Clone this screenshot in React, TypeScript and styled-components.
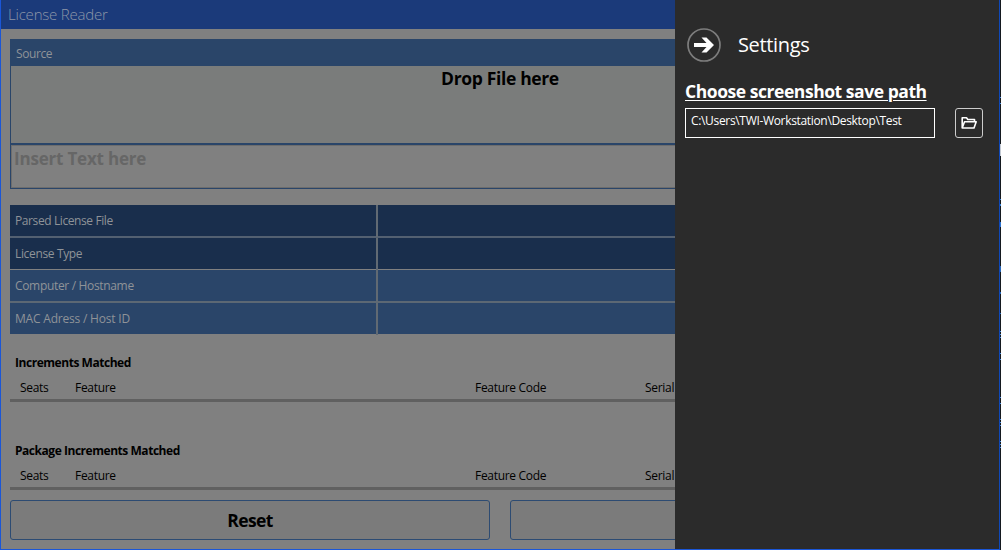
import React from "react";
import styled, { createGlobalStyle } from "styled-components";

const Global = createGlobalStyle`
  * { box-sizing: border-box; }
  body { margin: 0; overflow: hidden; background: #000; }
  button { font: inherit; color: inherit; padding: 0; margin: 0; }
`;

const Desktop = styled.div`
  position: relative;
  display: flex;
  width: 1001px;
  height: 550px;
  overflow: hidden;
  background: #14191f;
  font-family: "Open Sans", "Noto Sans", sans-serif;
`;

const Window = styled.div`
  width: 1000px;
  height: 550px;
  flex: none;
  display: flex;
  flex-direction: column;
  background: #808080;
  border: solid #1a56d8;
  border-width: 0 1px 1px;
  border-right-color: #0f48b8;
`;

const Label = styled.span<{ $size: number; $track?: number; $weight?: number }>`
  display: block;
  white-space: nowrap;
  font-size: ${(p) => p.$size}px;
  font-weight: ${(p) => p.$weight ?? 400};
  letter-spacing: ${(p) => p.$track ?? 0}px;
`;

const TitleBar = styled.header`
  height: 29px;
  flex: none;
  padding-left: 7px;
  line-height: 29px;
  color: #8c96a8;
  background: #1b3a7a;
`;

const Content = styled.main`
  padding: 10px 9px 0;
`;

const Source = styled.section`
  height: 150px;
  border: 1px solid #2a4569;
`;

const SourceHead = styled.div`
  height: 26px;
  padding: 1px 0 0 5px;
  line-height: 26px;
  color: #8f9398;
  background: #2a4569;
`;

const DropZone = styled.div`
  display: flex;
  justify-content: center;
  height: 79px;
  line-height: 25px;
  color: #000;
  background: #7a7c7b;
  border-bottom: 2px solid #2a4569;
`;

const TextInput = styled.div`
  height: 43px;
  padding-left: 2px;
  line-height: 26px;
  color: #666;
  border: 1px solid #6d6d6d;
`;

const Details = styled.section`
  margin-top: 16px;
  height: 129px;
  display: grid;
  grid-template-rows: 33px 32px 33px 31px;
`;

const DetailRow = styled.div<{ $dark?: boolean; $line?: string; $thick?: boolean }>`
  display: grid;
  grid-template-columns: 368px 1fr;
  color: #8f9398;
  background: ${(p) => (p.$dark ? "#192e4c" : "#2a4569")};
  border-bottom: ${(p) => (p.$line ? `${p.$thick ? 2 : 1}px solid ${p.$line}` : "0")};
`;

const DetailName = styled.div`
  padding-left: 5px;
  line-height: 32px;
  border-right: 2px solid #616a73;
`;

const Increments = styled.section`
  height: 58px;
  margin-top: 30px;

  &:first-child {
    margin-top: 10px;
  }
`;

const SectionTitle = styled.div`
  height: 33px;
  padding: 9px 0 0 5px;
  line-height: 20px;
`;

const Columns = styled.div`
  display: grid;
  grid-template-columns: 55px 400px 170px 1fr;
  height: 25px;
  padding-left: 10px;
  line-height: 21px;
  border-bottom: 3px solid #606060;
`;

const Buttons = styled.div`
  display: grid;
  grid-template-columns: 480px 480px;
  column-gap: 20px;
  margin-top: 10px;
`;

const WideButton = styled.button`
  display: flex;
  align-items: center;
  justify-content: center;
  height: 40px;
  border: 1px solid #2d4b72;
  border-radius: 3px;
  background: #7b7b7b;
  color: #000;
`;

const Flyout = styled.aside`
  position: absolute;
  left: 675px;
  top: 0;
  width: 324px;
  height: 549px;
  padding: 28px 16px 0 10px;
  color: #fff;
  background: #2b2b2b;
`;

const FlyoutHead = styled.div`
  display: flex;
  align-items: center;
  gap: 17px;
  height: 34px;
  padding-left: 2px;
  line-height: 26px;
`;

const Heading = styled.div`
  height: 46px;
  padding-top: 15px;
  line-height: 28px;
  text-decoration: underline;
  text-decoration-thickness: 1px;
  text-underline-offset: 2px;
`;

const PathRow = styled.div`
  display: flex;
  justify-content: space-between;
`;

const PathBox = styled.div`
  width: 250px;
  height: 30px;
  padding-left: 5px;
  line-height: 24px;
  border: 1px solid #fff;
`;

const BrowseButton = styled.button`
  display: flex;
  align-items: center;
  justify-content: center;
  width: 28px;
  height: 30px;
  border: 1px solid #ccc;
  border-radius: 3px;
  background: transparent;
`;

const BackIcon = () => (
  <svg width="34" height="34" viewBox="0 0 34 34">
    <circle cx="17" cy="17" r="16" fill="none" stroke="#7d7d7d" strokeWidth="1.7" />
    <path d="M7 15h12.500l-5-5.500h5l7.500 7.500-7.500 7.500h-5l5-5.500H7z" fill="#fff" />
  </svg>
);

const FolderIcon = () => (
  <svg width="16" height="14" viewBox="0 0 16 14">
    <path
      d="M1.200 12V1.800h4.300l1.300 1.700h6.700v2.200M1.200 12l2.300-6.300h11.700l-2.200 6.300z"
      fill="none"
      stroke="#fff"
      strokeWidth="1.600"
      strokeLinejoin="round"
    />
  </svg>
);

/* Sliver of the window lying behind, visible past the right border. */
const behind = [
  [97, 1, "#4f8fe0"],
  [103, 1, "#4f8fe0"],
  [144, 12, "#c4cad4"],
  [199, 1, "#3c86d8"],
  [204, 2, "#3c86d8"],
  [222, 5, "#2f74d0"],
  [266, 6, "#2a68b8"],
  [292, 2, "#2a68b8"],
  [313, 1, "#2a68b8"],
  [331, 1, "#4f8fe0"],
  [334, 1, "#4f8fe0"],
  [337, 1, "#4f8fe0"],
  [353, 1, "#4f8fe0"],
  [359, 1, "#4f8fe0"],
  [397, 1, "#4f8fe0"],
  [403, 1, "#4f8fe0"],
  [419, 1, "#4f8fe0"],
  [422, 1, "#4f8fe0"],
  [425, 1, "#4f8fe0"],
  [441, 1, "#4f8fe0"],
  [444, 1, "#4f8fe0"],
  [447, 1, "#4f8fe0"],
] as const;

const Sliver = () => (
  <svg width="1" height="550" shapeRendering="crispEdges">
    {behind.map(([y, h, fill]) => (
      <rect key={y} y={y} width="1" height={h} fill={fill} />
    ))}
  </svg>
);

const details = [
  { name: "Parsed License File", track: -0.4, dark: true, line: "#536071", thick: true },
  { name: "License Type", track: -0.35, dark: true, line: "#808080" },
  { name: "Computer / Hostname", track: -0.33, line: "#5c6874", thick: true },
  { name: "MAC Adress / Host ID", track: -0.2 },
];

const Matched = ({ title }: { title: string }) => (
  <Increments>
    <SectionTitle>
      <Label $size={12} $weight={700} $track={-0.46}>{title}</Label>
    </SectionTitle>
    <Columns>
      {["Seats", "Feature", "Feature Code", "Serial"].map((c) => (
        <Label key={c} $size={12} $weight={500} $track={-0.3}>{c}</Label>
      ))}
    </Columns>
  </Increments>
);

export default function App() {
  return (
    <Desktop>
      <Global />
      <Window>
        <TitleBar>
          <Label $size={15} $weight={300} $track={-0.2}>License Reader</Label>
        </TitleBar>
        <Content>
          <Source>
            <SourceHead><Label $size={12} $track={-0.4}>Source</Label></SourceHead>
            <DropZone><Label $size={17.5} $weight={700} $track={-0.35}>Drop File here</Label></DropZone>
            <TextInput><Label $size={17} $weight={700} $track={-0.2}>Insert Text here</Label></TextInput>
          </Source>
          <Details>
            {details.map((d) => (
              <DetailRow key={d.name} $dark={d.dark} $line={d.line} $thick={d.thick}>
                <DetailName><Label $size={12} $track={d.track}>{d.name}</Label></DetailName>
              </DetailRow>
            ))}
          </Details>
          <div>
            <Matched title="Increments Matched" />
            <Matched title="Package Increments Matched" />
          </div>
          <Buttons>
            <WideButton><Label $size={17.5} $weight={700} $track={-0.6}>Reset</Label></WideButton>
            <WideButton />
          </Buttons>
        </Content>
      </Window>
      <Sliver />
      <Flyout>
        <FlyoutHead>
          <BackIcon />
          <Label $size={20} $track={-0.35}>Settings</Label>
        </FlyoutHead>
        <Heading><Label $size={17.5} $weight={700} $track={-0.45}>Choose screenshot save path</Label></Heading>
        <PathRow>
          <PathBox><Label $size={12} $track={-0.33}>C:\Users\TWI-Workstation\Desktop\Test</Label></PathBox>
          <BrowseButton aria-label="Browse"><FolderIcon /></BrowseButton>
        </PathRow>
      </Flyout>
    </Desktop>
  );
}
